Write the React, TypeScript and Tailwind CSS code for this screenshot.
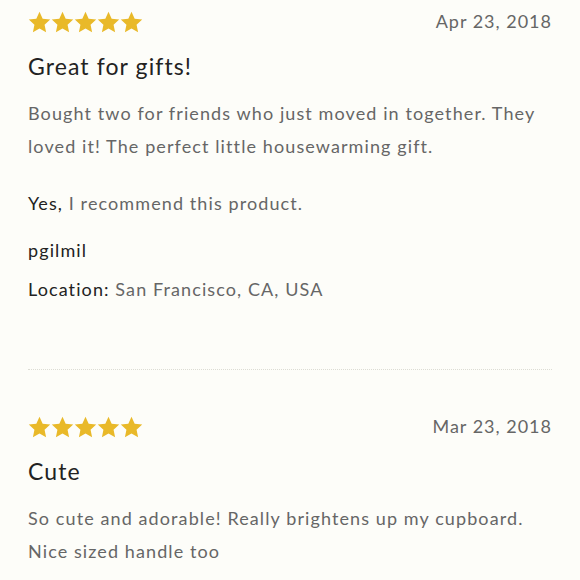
import React from "react";

const reviews = [
  {
    date: "Apr 23, 2018",
    title: "Great for gifts!",
    body: "Bought two for friends who just moved in together. They loved it! The perfect little housewarming gift.",
    recommend: true,
    author: "pgilmil",
    location: "San Francisco, CA, USA",
  },
  {
    date: "Mar 23, 2018",
    title: "Cute",
    body: "So cute and adorable! Really brightens up my cupboard. Nice sized handle too",
    recommend: false,
    author: "",
    location: "",
  },
];

function Star() {
  return (
    <svg width="23" height="22" viewBox="0 0 24 23" className="shrink-0">
      <path
        d="M12 0.8l3.3 7.2 7.9 0.9-5.9 5.4 1.6 7.8L12 18.2l-6.9 3.9 1.6-7.8L0.8 8.9l7.9-0.9z"
        fill="#e9b929"
      />
    </svg>
  );
}

function Review({ r }: { r: (typeof reviews)[number] }) {
  return (
    <div>
      <div className="flex items-center justify-between h-[43px]">
        <div className="flex">
          {[0, 1, 2, 3, 4].map((i) => (
            <Star key={i} />
          ))}
        </div>
        <span className="text-[18px] text-[#666] tracking-[1px]">{r.date}</span>
      </div>
      <h2 className="text-[23px] text-[#222] leading-[46px] tracking-[1.1px]">{r.title}</h2>
      <p className="text-[18px] text-[#666] leading-[33px] mt-[8px] tracking-[1.1px] pr-[6px]">{r.body}</p>
      {r.recommend && (
        <>
          <p className="text-[18px] text-[#666] leading-[33px] mt-[24px] tracking-[1.1px]">
            <span className="text-[#222]">Yes,</span> I recommend this product.
          </p>
          <p className="text-[18px] text-[#222] leading-[33px] mt-[14px] tracking-[1.1px]">{r.author}</p>
          <p className="text-[18px] text-[#666] leading-[33px] mt-[6px] tracking-[1.1px]">
            <span className="text-[#222]">Location:</span> {r.location}
          </p>
          <div className="mt-[63px] mb-[35px] border-t border-dotted border-[#dcdcd4]" />
        </>
      )}
    </div>
  );
}

export default function App() {
  return (
    <div
      className="min-h-[580px] bg-[#fdfdf9] px-[28px] pt-0"
      style={{ fontFamily: "Lato, 'Noto Sans', sans-serif" }}
    >
      {reviews.map((r) => (
        <Review key={r.date} r={r} />
      ))}
    </div>
  );
}
